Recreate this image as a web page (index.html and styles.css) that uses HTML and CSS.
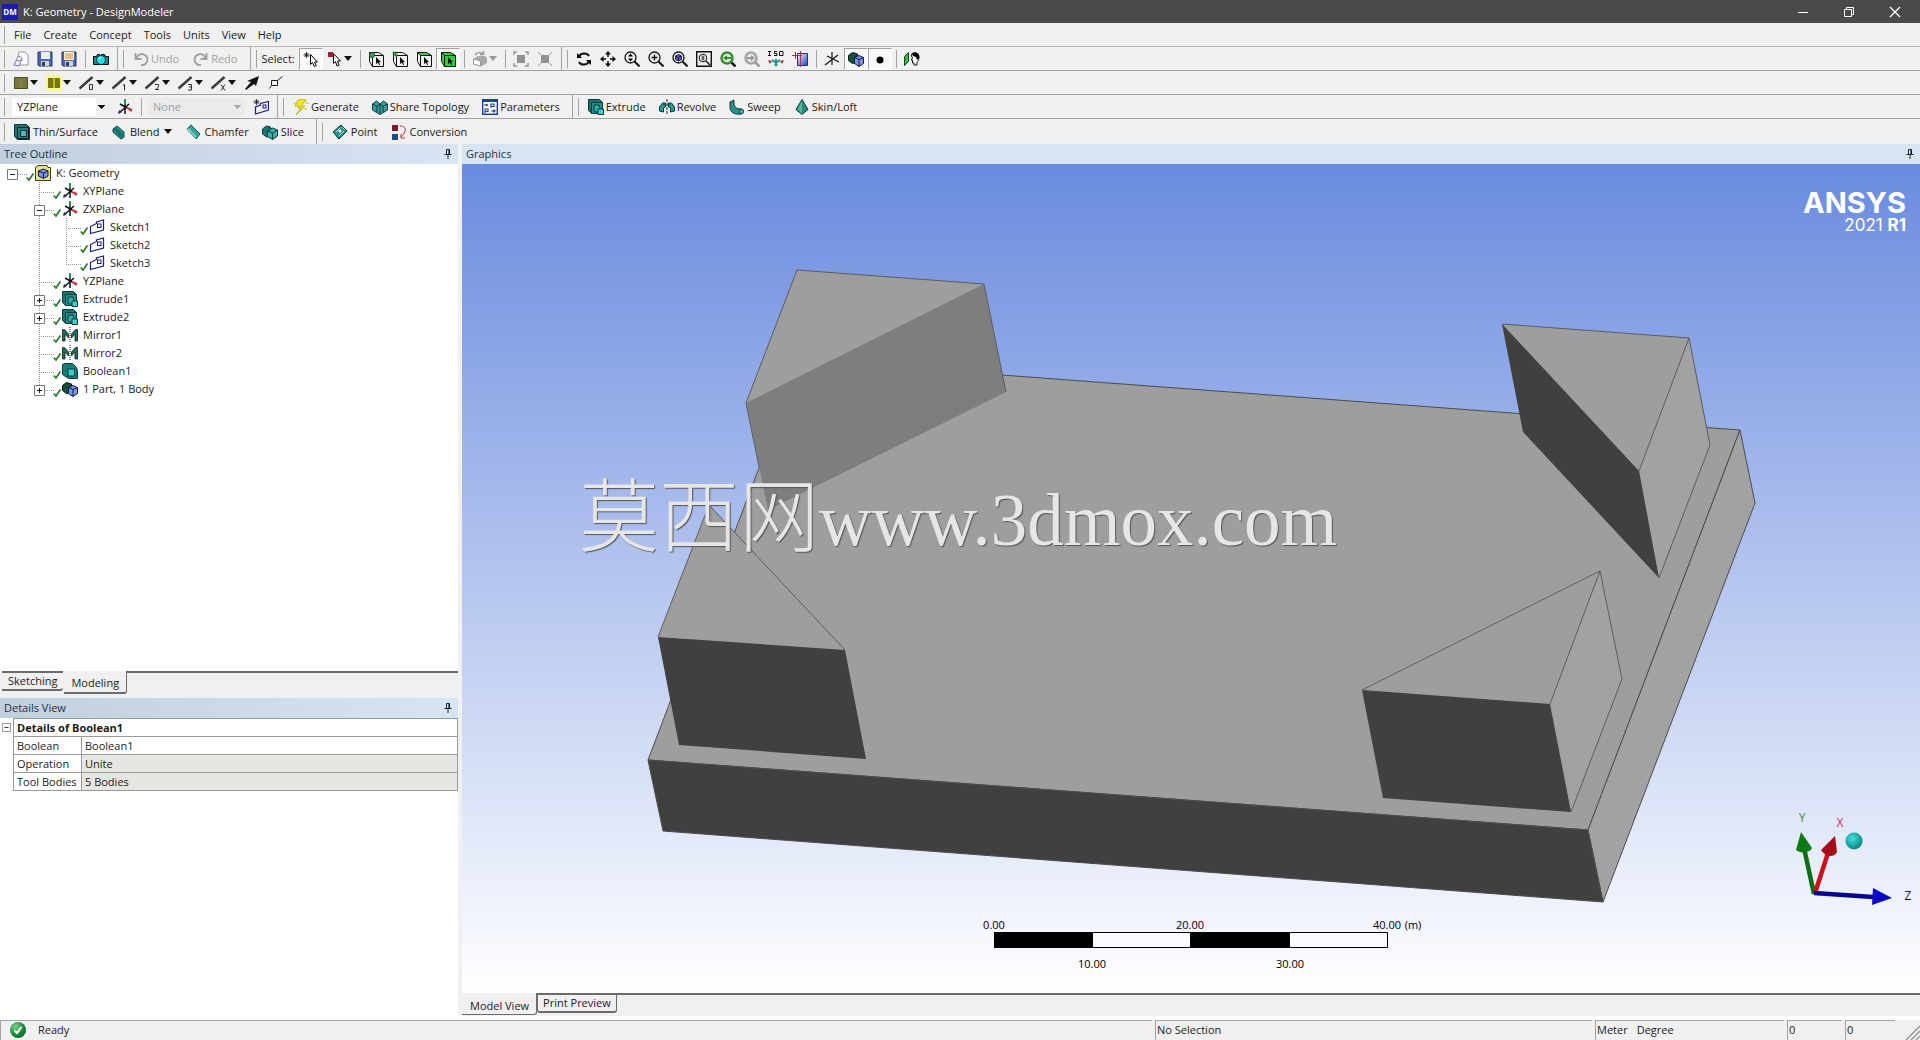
FILE: index.html
```html
<!DOCTYPE html>
<html lang="en">
<head>
<meta charset="utf-8">
<title>K: Geometry - DesignModeler</title>
<link rel="stylesheet" href="styles.css">
</head>
<body>
<svg class="defs" aria-hidden="true">
  <linearGradient id="g-blue" x1="0" y1="0" x2="1" y2="1"><stop offset="0" stop-color="#fff"/><stop offset="1" stop-color="#1c3fc0"/></linearGradient>
  <radialGradient id="g-ball" cx=".4" cy=".35" r=".7"><stop offset="0" stop-color="#3fe0dc"/><stop offset="1" stop-color="#067f80"/></radialGradient>
  <radialGradient id="g-ok" cx=".35" cy=".3" r=".8"><stop offset="0" stop-color="#7fd08a"/><stop offset=".6" stop-color="#1c8a3c"/><stop offset="1" stop-color="#0a5c22"/></radialGradient>
  <symbol id="i-new" viewBox="0 0 16 16"><path d="M6 1h6l3 3v10H3z" fill="#fbfbff" stroke="#99a" /><path d="M1 14l4-8 4 2-3 7z" fill="#eef" stroke="#77a"/><path d="M3 9l3-4 3 2-2 3z" fill="#fff" stroke="#889"/></symbol>
  <symbol id="i-save" viewBox="0 0 16 16"><path d="M1 1h14v14H2l-1-1z" fill="#4a68b0" stroke="#22346e"/><path d="M4 1h9v7H4z" fill="#e9eef8"/><path d="M4 10h8v5H4z" fill="#ccd3dd"/><path d="M5 11h3v4H5z" fill="#2c3c60"/></symbol>
  <symbol id="i-saveas" viewBox="0 0 16 16"><path d="M1 1h14v14H2l-1-1z" fill="#4a68b0" stroke="#22346e"/><path d="M3 1h10v8H3z" fill="#fff3d8"/><path d="M4 3h8M4 5h8M4 7h8" stroke="#d08a30"/><path d="M4 10h8v5H4z" fill="#ccd3dd"/><path d="M5 11h3v4H5z" fill="#2c3c60"/></symbol>
  <symbol id="i-camera" viewBox="0 0 16 16"><path d="M.5 5.500h3l1-2h2l1 1.500 1-1.500h3l1 2h3v8H.5z" fill="#1d8a94" stroke="#000"/><circle cx="8" cy="9" r="4.500" fill="#25dfe6" stroke="#033"/><path d="M6 7.500l2-1" stroke="#fff"/></symbol>
  <symbol id="i-undo" viewBox="0 0 16 16"><path d="M2.500 2v6h6M3.500 7.500A5.500 5.500 0 1 1 8 14" fill="none" stroke="#a2a2a2" stroke-width="2"/></symbol>
  <symbol id="i-redo" viewBox="0 0 16 16"><path d="M13.500 2v6h-6M12.500 7.500A5.500 5.500 0 1 0 8 14" fill="none" stroke="#a2a2a2" stroke-width="2"/></symbol>
  <symbol id="i-pick" viewBox="0 0 16 16"><path d="M3.500 1v6M.5 4h6M1.500 2l4 4M5.500 2l-4 4" stroke="#000" stroke-width=".8"/><path d="M7.500 3.500v10l2-2 1.800 4 2-1-1.800-3.500h3z" fill="#fff" stroke="#000"/></symbol>
  <symbol id="i-mode" viewBox="0 0 16 16"><path d="M1 1h5v5H1z" fill="#a01c30"/><path d="M6.500 2.500v10l2-2 1.500 4.500 2-1-1.500-4h3z" fill="#fff" stroke="#000"/></symbol>
  <symbol id="i-cube-wire" viewBox="0 0 16 16"><path d="M4.500 4.500h11v11h-11zM4.500 4.500l-3-3h9l5 3M1.500 1.500v9l3 5" fill="none" stroke="#111"/><path d="M8 6v7l2-1.500 1 2.500 1-.5-1-2.500h2z"/></symbol>
  <symbol id="i-cube-pt" viewBox="0 0 16 16"><use href="#i-cube-wire"/><circle cx="4" cy="4" r="2.500" fill="#4aa04a" stroke="#153"/></symbol>
  <symbol id="i-cube-edge" viewBox="0 0 16 16"><use href="#i-cube-wire"/><path d="M1 1l4 4" stroke="#2c8a2c" stroke-width="2.500"/></symbol>
  <symbol id="i-cube-face" viewBox="0 0 16 16"><path d="M1.500 1.500h9l5 3h-11z" fill="#45c94f"/><use href="#i-cube-wire"/></symbol>
  <symbol id="i-cube-body" viewBox="0 0 16 16"><path d="M1.500 1.500h9l5 3v11h-11l-3-5z" fill="#25d436"/><use href="#i-cube-wire"/></symbol>
  <symbol id="i-extend" viewBox="0 0 16 16"><path d="M1 8l5-3h7l2 2v5l-6 3.500-8-2z" fill="#a8a8a8"/><path d="M1.500 8l7 2v5l-7-2z" fill="#fff" stroke="#999"/><path d="M3 4c2-3 6-3 8-1M11.500 0v3.500H8" fill="none" stroke="#999" stroke-width="1.500"/></symbol>
  <symbol id="i-box" viewBox="0 0 16 16"><path d="M4 4h8v8H4z" fill="#919191"/><path d="M1 4V1h3M12 1h3v3M15 12v3h-3M4 15H1v-3" fill="none" stroke="#999" stroke-width="1.500"/></symbol>
  <symbol id="i-shrink" viewBox="0 0 16 16"><path d="M4 4h8v8H4z" fill="#919191"/><path d="M1 1l4 4M15 1l-4 4M1 15l4-4M15 15l-4-4" stroke="#999"/></symbol>
  <symbol id="i-rotate" viewBox="0 0 16 16"><path d="M3 6c1-4 8-5 10-1M13 10c-1 4-8 5-10 1" fill="none" stroke="#111" stroke-width="2"/><path d="M1 2v5h5zM15 14V9h-5z"/></symbol>
  <symbol id="i-pan" viewBox="0 0 16 16"><path d="M8 2v4M8 10v4M2 8h4M10 8h4" stroke="#111" stroke-width="1.500"/><path d="M8 0l3 3.500H5zM8 16l3-3.500H5zM0 8l3.500-3v6zM16 8l-3.500-3v6z"/></symbol>
  <symbol id="i-lens" viewBox="0 0 16 16"><circle cx="6.500" cy="6.500" r="5.500" fill="none" stroke="#111" stroke-width="1.300"/><path d="M10.500 10.500l5 5" stroke="#111" stroke-width="2"/></symbol>
  <symbol id="i-zoom" viewBox="0 0 16 16"><use href="#i-lens"/><path d="M6.500 2.500l2.500 3H4zM6.500 10.500l2.500-3H4z"/></symbol>
  <symbol id="i-zoomin" viewBox="0 0 16 16"><use href="#i-lens"/><path d="M6.500 3.500v6M3.500 6.500h6" stroke="#111" stroke-width="1.300"/></symbol>
  <symbol id="i-zoombody" viewBox="0 0 16 16"><use href="#i-lens"/><path d="M3.500 5l3-1.500 3 1.500v3.500l-3 1.500-3-1.500z" fill="#5a58b8" stroke="#1c1c60"/><path d="M3.500 5l3 1.500 3-1.500M6.500 6.500V10" fill="none" stroke="#1c1c60"/></symbol>
  <symbol id="i-zoombox" viewBox="0 0 16 16"><path d="M.7.700h14.600v14.600H.7z" fill="none" stroke="#111" stroke-width="1.400"/><circle cx="7" cy="7" r="3.800" fill="none" stroke="#111"/><path d="M10 10l4 4" stroke="#111" stroke-width="1.500"/><path d="M7 4.500v5M5.500 6h3M5.500 8h3" stroke="#111" stroke-width=".8"/></symbol>
  <symbol id="i-prev" viewBox="0 0 16 16"><path d="M11 11l4.500 4.500" stroke="#111" stroke-width="2.500"/><circle cx="7" cy="7" r="5.500" fill="#e4f5df" stroke="#3a8a34" stroke-width="2.500"/><path d="M3 7l4-3v2h4v2H7v2z" fill="#3a8a34"/></symbol>
  <symbol id="i-next" viewBox="0 0 16 16"><path d="M11 11l4.500 4.500" stroke="#999" stroke-width="2.500"/><circle cx="7" cy="7" r="5.500" fill="#e8e8e8" stroke="#a5a5a5" stroke-width="2.500"/><path d="M11 7L7 4v2H3v2h4v2z" fill="#999"/></symbol>
  <symbol id="i-iso" viewBox="0 0 16 16"><path d="M1.500 0v5M0 .5h3M0 4.500h3M9 .5H6.500v2H9v2H6M11.500.5h3.500v4h-3.500z" fill="none" stroke="#111"/><path d="M8 8v5M4 9l4 3 4-3" stroke="#1a9a94" stroke-width="2" fill="none"/><path d="M0 9l4 1-2 3zM16 9l-4 1 2 3z" fill="#a03030"/><path d="M6 13h4l-2 3z" fill="#1a9a94"/></symbol>
  <symbol id="i-lookat" viewBox="0 0 16 16"><path d="M5.500 2.500h10v12h-10z" fill="url(#g-blue)" stroke="#22306e"/><path d="M0 4.500h10M8.500 0v16M3.500 1v7" stroke="#b0304a" fill="none"/></symbol>
  <symbol id="i-axes" viewBox="0 0 16 16"><path d="M8 1v13M1 14L14 4M3 5l12 6" stroke="#111" stroke-width="1.200"/></symbol>
  <symbol id="i-part" viewBox="0 0 16 16"><path d="M.5 4.500l4-3 5 1.500v8l-5 1.500-4-3z" fill="#154f37" stroke="#03180f"/><path d="M6.500 6.500l4.500-2 4.500 2v6l-4.500 3-4.500-3z" fill="#7c95de" stroke="#101850"/><path d="M6.500 6.500l4.500 2 4.500-2M11 8.500v7" fill="none" stroke="#101850"/></symbol>
  <symbol id="i-dot" viewBox="0 0 16 16"><circle cx="8" cy="9" r="3.500"/></symbol>
  <symbol id="i-face" viewBox="0 0 16 16"><path d="M.5 5.500l4-4v9l-4 4z" fill="#3fb04a" stroke="#0c4a16"/><path d="M7 4c2-4 9-2 8 3-.5 3-1 3-2 4v3h-3v-2H8.500V9H7l1.500-2z" fill="#fff" stroke="#111"/><path d="M8 3c3-3 8-1 7 4l-2 2-1-3-3-1z"/></symbol>
  <symbol id="i-rect" viewBox="0 0 16 16"><path d="M1.500 2.500h13v11h-13z" fill="#77773f" stroke="#4d4d20"/><path d="M8 3v10" stroke="#8f8f55"/></symbol>
  <symbol id="i-rect2" viewBox="0 0 16 16"><rect width="16" height="16" rx="3" fill="#f8f88a"/><path d="M2 3h5.500v10H2zM8.500 3H14v10H8.500z" fill="#77770c"/></symbol>
  <symbol id="i-line" viewBox="0 0 16 16"><path d="M.5 13.500L13.500 2" stroke="#3c3c3c" stroke-width="2.500"/></symbol>
  <symbol id="i-l0" viewBox="0 0 16 16"><use href="#i-line"/><path d="M10.500 9.500h3v5h-3z" fill="none" stroke="#333"/></symbol>
  <symbol id="i-l1" viewBox="0 0 16 16"><use href="#i-line"/><path d="M11 10.500l1.500-1v6" fill="none" stroke="#333"/></symbol>
  <symbol id="i-l2" viewBox="0 0 16 16"><use href="#i-line"/><path d="M10 9.500h3.500v2.500l-3 2.500H14" fill="none" stroke="#333"/></symbol>
  <symbol id="i-l3" viewBox="0 0 16 16"><use href="#i-line"/><path d="M10 9.500h3.500v5.500H10M11 12h2.500" fill="none" stroke="#333"/></symbol>
  <symbol id="i-lx" viewBox="0 0 16 16"><use href="#i-line"/><path d="M10 9.500l4 6M14 9.500l-4 6" fill="none" stroke="#333"/></symbol>
  <symbol id="i-arrow" viewBox="0 0 16 16"><path d="M15 1l-3 10-2-2-8 6-1-1 6-7-4-1z" fill="#111"/></symbol>
  <symbol id="i-vertex" viewBox="0 0 16 16"><path d="M3.500 5.500h6v5h-6zM9.500 5.500l5-4M3.500 10.500l-2 3" fill="none" stroke="#222"/></symbol>
  <symbol id="i-plane" viewBox="0 0 16 16"><path d="M8 1v14M2 14L12 5M3 5l7 4" stroke="#111" stroke-width="1.500" fill="none"/><path d="M7 0h2v5H7z" fill="#2f8f4f"/><path d="M10 8l5.500 2-1 3-4.500-3z" fill="#c03848"/><path d="M1 15l1-4 3 2z" fill="#26268c"/></symbol>
  <symbol id="i-sketch" viewBox="0 0 16 16"><path d="M1.500 14.500v-7l6-3V3l7-2v10z" fill="none" stroke="#1b1b86" stroke-width="1.200"/><rect x="8.500" y="5" width="3.500" height="3.500" fill="none" stroke="#1b1b86"/></symbol>
  <symbol id="i-newsketch" viewBox="0 0 16 16"><path d="M2.500 15V8l5-2V4.500l8-2V11z" fill="none" stroke="#1b1b86" stroke-width="1.200"/><rect x="10" y="6" width="3" height="3" fill="none" stroke="#1b1b86"/><path d="M3.500 0v6M.5 3h6M1.500 1l4 4M5.500 1l-4 4" stroke="#111" stroke-width=".8"/></symbol>
  <symbol id="i-generate" viewBox="0 0 16 16"><path d="M11 0L5 1 2 7h4l-1 2h3l-5 7 9-9H8l5-6z" fill="#f4ea1a" stroke="#a89a10" stroke-width=".7"/><path d="M0 4h3M11 10h3M12 4h4" stroke="#d8c814"/></symbol>
  <symbol id="i-share" viewBox="0 0 16 16"><path d="M.5 5l4-3 3.500 3 3.500-3 4 3v6L8 15.500.5 11z" fill="#3a9c9c" stroke="#0a4040"/><path d="M.5 5L5 7.500 8 5l3 2.500L15.500 5M5 7.500V13M11 7.500V13M8 5v10" fill="none" stroke="#0a4040"/></symbol>
  <symbol id="i-param" viewBox="0 0 16 16"><path d="M.7 1h14.600v14.300H.7z" fill="#fff" stroke="#1c3f9c" stroke-width="1.400"/><path d="M0 0h16v3H0z" fill="#1c3f9c"/><path d="M2 6h3M9 9V5h3v2.500H9M3 14v-4h3v2.500H3M9 12h4M4 5l1.500 1L4 7M11.500 10.500L13 12l-1.500 1.500" fill="none" stroke="#1c3f9c" stroke-width="1.200"/></symbol>
  <symbol id="i-extrude" viewBox="0 0 16 16"><path d="M.5.500h11l3 3v11h-11l-3-3z" fill="#1b7575" stroke="#063b3b"/><path d="M3.500 3.500h11v11h-11z" fill="#2b8f8c" stroke="#063b3b"/><path d="M6 6h5l1 3v4H7l-1-2z" fill="#36aaa6" stroke="#063b3b"/><path d="M10 10h5.500v5.500H10z" fill="#3fd0d0" stroke="#063b3b"/></symbol>
  <symbol id="i-revolve" viewBox="0 0 16 16"><path d="M.5 12V8l3-4h3v4l-2 1v4zM15.500 12V8l-3-4h-3v4l2 1v4z" fill="#2b9a90" stroke="#063b3b"/><path d="M8 0v16M4 6h8" stroke="#063b3b" stroke-dasharray="3 1"/></symbol>
  <symbol id="i-sweep" viewBox="0 0 16 16"><path d="M1 3l4-2v5c1 3 4 4 7 4l3 2-3 3C5 16 1 13 1 8z" fill="#2b8f8c" stroke="#063b3b"/><ellipse cx="12.500" cy="12.500" rx="2" ry="2.500" fill="#45c0b8" stroke="#063b3b"/></symbol>
  <symbol id="i-skin" viewBox="0 0 16 16"><path d="M8 .5l3 5 3 5-6 5-6-5 3-5z" fill="#258878" stroke="#063b3b"/><path d="M8 1v14l-4-5z" fill="#50b8a0"/></symbol>
  <symbol id="i-thin" viewBox="0 0 16 16"><path d="M.5.500h12l3 3v12h-12l-3-3z" fill="#1b7575" stroke="#063b3b"/><path d="M3.500 3.500h11v11h-11z" fill="#1f8080" stroke="#022"/><path d="M6.500 6.500h6v6h-6z" fill="#4ab8b4" stroke="#022"/></symbol>
  <symbol id="i-blend" viewBox="0 0 16 16"><path d="M2 5l4-3 7 6v5l-3 2-8-7z" fill="#2b9a90" stroke="#063b3b"/><path d="M2 5l4-1 7 7-3 3z" fill="#197070"/></symbol>
  <symbol id="i-chamfer" viewBox="0 0 16 16"><path d="M2 5l4-4 9 9-4 5z" fill="#2fa39c" stroke="#0a5a5a"/><path d="M2 5l9 10v-3L4 4z" fill="#7fd0c8"/></symbol>
  <symbol id="i-slice" viewBox="0 0 16 16"><path d="M.5 5l4-3 4 1v9l-4 1-4-3z" fill="#1b7575" stroke="#063b3b"/><path d="M5.500 7l5-3 5 2v6l-5 3.500-5-3z" fill="#38b0a4" stroke="#063b3b"/><path d="M5.500 7l5 2 5-3M10.500 9v6" stroke="#063b3b" fill="none"/></symbol>
  <symbol id="i-point" viewBox="0 0 16 16"><path d="M1 8l8-7 6 6-8 8z" fill="#2b8f8c" stroke="#063b3b"/><path d="M4 8l4-4M7 12l5-5M10 3l3 3" stroke="#a8e0dc"/><circle cx="8" cy="7" r="1.500" fill="#fff"/></symbol>
  <symbol id="i-conv" viewBox="0 0 16 16"><path d="M1 1h6v6H1z" fill="#7d1c2c"/><path d="M1 10h6v6H1z" fill="#1c4a8c"/><path d="M9 2c4 0 6 2 5 5s-2 4-4 6M10 10v4h4" fill="none" stroke="#b83040"/></symbol>
  <symbol id="i-root" viewBox="0 0 16 16"><path d="M.5 2.500L3 .5h9l1 2h2.500v13H.5z" fill="#e9e08e" stroke="#3f3c10"/><path d="M3.500 6l5-2 4.500 2v5l-4.500 2.500-5-2.500z" fill="#7c95de" stroke="#101850"/><path d="M3.500 6l5 2 4.500-2M8.500 8v5" fill="none" stroke="#101850"/></symbol>
  <symbol id="i-mirror" viewBox="0 0 16 16"><path d="M.5 2.500h2l4 4.500v4L3 7v7H.5zM15.500 2.500h-2L9.500 7v4L13 7v7h2.500z" fill="#1d6e5c" stroke="#0a1f1a" stroke-width=".8"/><path d="M8 0v16" stroke="#111" stroke-dasharray="1 1"/></symbol>
  <symbol id="i-bool" viewBox="0 0 16 16"><path d="M.5 1.500l2-1h8l4 4 1 3v8h-9l-6-4z" fill="#1b7d78" stroke="#063b3b"/><path d="M6 6h6.500v7H6z" fill="#35d0cc" stroke="#063b3b"/></symbol>
  <symbol id="i-check" viewBox="0 0 8 8"><path d="M.8 4.500L3 7l4.500-6.500" fill="none" stroke="#2f7d32" stroke-width="1.800"/></symbol>
  <symbol id="i-pin" viewBox="0 0 8 10"><path d="M2.500.5h3v5h-3zM.5 5.500h7M4 6v4" fill="none" stroke="#1b2733" /><path d="M4.500 1h1v4h-1z"/></symbol>
  <symbol id="i-minus" viewBox="0 0 11 11"><path d="M.5.500h10v10H.5z" fill="#fff" stroke="#777"/><path d="M3 5.500h5" stroke="#111"/></symbol>
  <symbol id="i-plus" viewBox="0 0 11 11"><path d="M.5.500h10v10H.5z" fill="#fff" stroke="#777"/><path d="M3 5.500h5M5.500 3v5" stroke="#111"/></symbol>
</svg>

<header class="titlebar">
  <span class="app-badge">DM</span>
  <h1 class="title">K: Geometry - DesignModeler</h1>
  <button class="win" aria-label="Minimize"><svg width="12" height="12"><path d="M1 6.500h10" stroke="#fff"/></svg></button>
  <button class="win" aria-label="Restore"><svg width="12" height="12"><path d="M1.500 3.500h7v7h-7zM3.500 3V1.500h7v7H9" fill="none" stroke="#fff"/></svg></button>
  <button class="win" aria-label="Close"><svg width="12" height="12"><path d="M1 1l10 10M11 1L1 11" stroke="#fff" stroke-width="1.300"/></svg></button>
</header>

<nav class="row menu">
  <span class="grip"></span>
  <button>File</button><button>Create</button><button>Concept</button><button>Tools</button><button>Units</button><button>View</button><button>Help</button>
</nav>

<div class="row">
  <div class="bar"><span class="grip"></span>
    <button class="tb" aria-label="New"><svg><use href="#i-new"/></svg></button>
    <button class="tb" aria-label="Save"><svg><use href="#i-save"/></svg></button>
    <button class="tb" aria-label="Save as"><svg><use href="#i-saveas"/></svg></button>
    <span class="sep"></span>
    <button class="tb" aria-label="Image capture"><svg><use href="#i-camera"/></svg></button>
  </div>
  <div class="bar"><span class="grip"></span>
    <button class="lbl" disabled><svg><use href="#i-undo"/></svg>Undo</button>
    <button class="lbl" disabled><svg><use href="#i-redo"/></svg>Redo</button>
  </div>
  <div class="bar"><span class="grip"></span>
    <span class="caption">Select:</span>
    <button class="tb on" aria-label="New selection"><svg><use href="#i-pick"/></svg></button>
    <button class="tb drop" aria-label="Select mode"><svg><use href="#i-mode"/></svg><i class="caret"></i></button>
    <span class="sep"></span>
    <button class="tb" aria-label="Points"><svg><use href="#i-cube-pt"/></svg></button>
    <button class="tb" aria-label="Edges"><svg><use href="#i-cube-edge"/></svg></button>
    <button class="tb" aria-label="Faces"><svg><use href="#i-cube-face"/></svg></button>
    <button class="tb on" aria-label="Bodies"><svg><use href="#i-cube-body"/></svg></button>
    <span class="sep"></span>
    <button class="tb drop" disabled aria-label="Extend selection"><svg><use href="#i-extend"/></svg><i class="caret"></i></button>
    <span class="sep"></span>
    <button class="tb" disabled aria-label="Expand"><svg><use href="#i-box"/></svg></button>
    <button class="tb" disabled aria-label="Shrink"><svg><use href="#i-shrink"/></svg></button>
  </div>
  <div class="bar last"><span class="grip"></span>
    <button class="tb" aria-label="Rotate"><svg><use href="#i-rotate"/></svg></button>
    <button class="tb" aria-label="Pan"><svg><use href="#i-pan"/></svg></button>
    <button class="tb" aria-label="Zoom"><svg><use href="#i-zoom"/></svg></button>
    <button class="tb" aria-label="Zoom in"><svg><use href="#i-zoomin"/></svg></button>
    <button class="tb" aria-label="Zoom to body"><svg><use href="#i-zoombody"/></svg></button>
    <button class="tb" aria-label="Box zoom"><svg><use href="#i-zoombox"/></svg></button>
    <button class="tb" aria-label="Previous view"><svg><use href="#i-prev"/></svg></button>
    <button class="tb" disabled aria-label="Next view"><svg><use href="#i-next"/></svg></button>
    <button class="tb" aria-label="Isometric view"><svg><use href="#i-iso"/></svg></button>
    <button class="tb" aria-label="Look at"><svg><use href="#i-lookat"/></svg></button>
    <span class="sep"></span>
    <button class="tb" aria-label="Display plane"><svg><use href="#i-axes"/></svg></button>
    <button class="tb on" aria-label="Display model"><svg><use href="#i-part"/></svg></button>
    <button class="tb on" aria-label="Display points"><svg><use href="#i-dot"/></svg></button>
    <span class="sep"></span>
    <button class="tb" aria-label="Look at face"><svg><use href="#i-face"/></svg></button>
  </div>
</div>

<div class="row">
  <div class="bar last"><span class="grip"></span>
    <button class="tb drop" aria-label="Face colour"><svg><use href="#i-rect"/></svg><i class="caret"></i></button>
    <button class="tb drop" aria-label="Edge colouring"><svg><use href="#i-rect2"/></svg><i class="caret"></i></button>
    <button class="tb drop" aria-label="Edges with no faces"><svg><use href="#i-l0"/></svg><i class="caret"></i></button>
    <button class="tb drop" aria-label="Edges with one face"><svg><use href="#i-l1"/></svg><i class="caret"></i></button>
    <button class="tb drop" aria-label="Edges with two faces"><svg><use href="#i-l2"/></svg><i class="caret"></i></button>
    <button class="tb drop" aria-label="Edges with three faces"><svg><use href="#i-l3"/></svg><i class="caret"></i></button>
    <button class="tb drop" aria-label="Edges with many faces"><svg><use href="#i-lx"/></svg><i class="caret"></i></button>
    <button class="tb" aria-label="Edge direction"><svg><use href="#i-arrow"/></svg></button>
    <button class="tb" aria-label="Vertices"><svg><use href="#i-vertex"/></svg></button>
  </div>
</div>

<div class="row">
  <div class="bar"><span class="grip"></span>
    <select class="combo" aria-label="Active plane"><option>YZPlane</option></select>
    <button class="tb" aria-label="New plane"><svg><use href="#i-plane"/></svg></button>
    <span class="sep"></span>
    <select class="combo" aria-label="Active sketch" disabled><option>None</option></select>
    <button class="tb" aria-label="New sketch"><svg><use href="#i-newsketch"/></svg></button>
  </div>
  <div class="bar"><span class="grip"></span>
    <button class="lbl"><svg><use href="#i-generate"/></svg>Generate</button>
    <button class="lbl"><svg><use href="#i-share"/></svg>Share Topology</button>
    <button class="lbl"><svg><use href="#i-param"/></svg>Parameters</button>
  </div>
  <div class="bar last"><span class="grip"></span>
    <button class="lbl"><svg><use href="#i-extrude"/></svg>Extrude</button>
    <button class="lbl"><svg><use href="#i-revolve"/></svg>Revolve</button>
    <button class="lbl"><svg><use href="#i-sweep"/></svg>Sweep</button>
    <button class="lbl"><svg><use href="#i-skin"/></svg>Skin/Loft</button>
  </div>
</div>

<div class="row bottom">
  <div class="bar"><span class="grip"></span>
    <button class="lbl"><svg><use href="#i-thin"/></svg>Thin/Surface</button>
    <button class="lbl"><svg><use href="#i-blend"/></svg>Blend<i class="caret"></i></button>
    <button class="lbl"><svg><use href="#i-chamfer"/></svg>Chamfer</button>
    <button class="lbl"><svg><use href="#i-slice"/></svg>Slice</button>
  </div>
  <div class="bar last"><span class="grip"></span>
    <button class="lbl"><svg><use href="#i-point"/></svg>Point</button>
    <button class="lbl"><svg><use href="#i-conv"/></svg>Conversion</button>
  </div>
</div>

<main class="work">
  <aside class="side">
    <h2 class="head">Tree Outline<svg class="pin"><use href="#i-pin"/></svg></h2>
    <div class="tree">
      <ul>
        <li><div class="node"><svg class="exp"><use href="#i-minus"/></svg><svg class="ck"><use href="#i-check"/></svg><svg class="ic"><use href="#i-root"/></svg>K: Geometry</div>
          <ul>
            <li><div class="node"><span class="exp"></span><svg class="ck"><use href="#i-check"/></svg><svg class="ic"><use href="#i-plane"/></svg>XYPlane</div></li>
            <li><div class="node"><svg class="exp"><use href="#i-minus"/></svg><svg class="ck"><use href="#i-check"/></svg><svg class="ic"><use href="#i-plane"/></svg>ZXPlane</div>
              <ul>
                <li><div class="node"><span class="exp"></span><svg class="ck"><use href="#i-check"/></svg><svg class="ic"><use href="#i-sketch"/></svg>Sketch1</div></li>
                <li><div class="node"><span class="exp"></span><svg class="ck"><use href="#i-check"/></svg><svg class="ic"><use href="#i-sketch"/></svg>Sketch2</div></li>
                <li><div class="node"><span class="exp"></span><svg class="ck"><use href="#i-check"/></svg><svg class="ic"><use href="#i-sketch"/></svg>Sketch3</div></li>
              </ul>
            </li>
            <li><div class="node"><span class="exp"></span><svg class="ck"><use href="#i-check"/></svg><svg class="ic"><use href="#i-plane"/></svg>YZPlane</div></li>
            <li><div class="node"><svg class="exp"><use href="#i-plus"/></svg><svg class="ck"><use href="#i-check"/></svg><svg class="ic"><use href="#i-extrude"/></svg>Extrude1</div></li>
            <li><div class="node"><svg class="exp"><use href="#i-plus"/></svg><svg class="ck"><use href="#i-check"/></svg><svg class="ic"><use href="#i-extrude"/></svg>Extrude2</div></li>
            <li><div class="node"><span class="exp"></span><svg class="ck"><use href="#i-check"/></svg><svg class="ic"><use href="#i-mirror"/></svg>Mirror1</div></li>
            <li><div class="node"><span class="exp"></span><svg class="ck"><use href="#i-check"/></svg><svg class="ic"><use href="#i-mirror"/></svg>Mirror2</div></li>
            <li><div class="node"><span class="exp"></span><svg class="ck"><use href="#i-check"/></svg><svg class="ic"><use href="#i-bool"/></svg>Boolean1</div></li>
            <li><div class="node"><svg class="exp"><use href="#i-plus"/></svg><svg class="ck"><use href="#i-check"/></svg><svg class="ic"><use href="#i-part"/></svg>1 Part, 1 Body</div></li>
          </ul>
        </li>
      </ul>
    </div>
    <div class="tabs side-tabs">
      <button class="tab back">Sketching</button>
      <button class="tab front">Modeling</button>
      <span class="rest"></span>
    </div>
    <h2 class="head">Details View<svg class="pin"><use href="#i-pin"/></svg></h2>
    <div class="details">
      <table>
        <tr><td class="gut"><svg width="9" height="9" viewBox="0 0 11 11"><use href="#i-minus"/></svg></td><th colspan="2">Details of Boolean1</th></tr>
        <tr><td class="gut"></td><td class="key">Boolean</td><td>Boolean1</td></tr>
        <tr><td class="gut"></td><td class="key">Operation</td><td class="ro">Unite</td></tr>
        <tr><td class="gut"></td><td class="key">Tool Bodies</td><td class="ro">5 Bodies</td></tr>
      </table>
    </div>
  </aside>

  <section class="graphics">
    <h2 class="head light">Graphics<svg class="pin"><use href="#i-pin"/></svg></h2>
    <div class="view">
      <svg class="scene" viewBox="462 164 1458 829" preserveAspectRatio="xMidYMid meet">
        <g stroke="#4c4c4c" stroke-width="1" stroke-linejoin="round">
          <path d="M648 760L800 360 1740 430 1588 830z" fill="#9e9e9e"/>
          <path d="M1740 430L1755 503 1603 902 1588 830z" fill="#a2a2a2"/>
          <path d="M648 760L1588 830 1603 902 663 831z" fill="#404040"/>
        </g>
        <path d="M797 270L984 284 746 403z" class="top"/>
        <path d="M984 284L1006 392 768 510 746 403z" fill="#7e7e7e"/>
        <path d="M759 467L746 403 797 270 984 284 1006 392" class="edge"/>
        <path d="M709 505L845 650 658 637z" class="top"/>
        <path d="M709 505L845 650M709 505L658 637" class="edge"/>
        <path d="M658 637L845 650 866 759 679 745z" fill="#404040"/>
        <path d="M1502 324L1689 338 1639 471z" class="top"/>
        <path d="M1689 338L1710 445 1659 578 1639 471z" class="wall"/>
        <path d="M1502 324L1689 338 1710 445 1659 578M1689 338L1639 471" class="edge"/>
        <path d="M1502 324L1639 471 1659 578 1523 432z" fill="#404040"/>
        <path d="M1600 571L1550 704 1362 690z" class="top"/>
        <path d="M1600 571L1622 679 1571 812 1550 704z" class="wall"/>
        <path d="M1362 690L1600 571 1622 679 1571 812M1600 571L1550 704" class="edge"/>
        <path d="M1362 690L1550 704 1571 812 1383 798z" fill="#404040"/>

        <text class="mark" x="579" y="545"><tspan class="mark-cjk">莫西网</tspan><tspan class="mark-lat">www.3dmox.com</tspan></text>

        <text class="logo" x="1906" y="213">ANSYS</text>
        <text class="release" x="1906" y="231">2021 <tspan font-weight="700">R1</tspan></text>

        <path d="M994.500 932.500h393v15h-393z" fill="#fbfbff" stroke="#000"/>
        <path d="M994 932h99v16h-99zM1190 932h100v16h-100z"/>
        <g class="scale">
          <text x="994" y="929">0.00</text><text x="1190" y="929">20.00</text><text x="1387" y="929">40.00</text><text x="1413" y="929">(m)</text>
          <text x="1092" y="968">10.00</text><text x="1290" y="968">30.00</text>
        </g>

        <path d="M1814 894L1804 848" stroke="#0b6e12" stroke-width="4.500"/>
        <path d="M1801 832l11 16c-2 5-12 6-16 2z" fill="#0d7a14"/>
        <path d="M1815 893L1828 853" stroke="#cc1119" stroke-width="4.500"/>
        <path d="M1835 836l2 16c-3 6-12 5-16-2z" fill="#a80d16"/>
        <path d="M1814 893L1873 897" stroke="#06068f" stroke-width="4.500"/>
        <path d="M1892 898l-20 7 1-17z" fill="#0a0ac4"/>
        <circle cx="1854" cy="841" r="8.500" fill="url(#g-ball)"/>
        <g class="axis"><text x="1802" y="822" fill="#3f8f4a">Y</text><text x="1840" y="827" fill="#c03060">X</text><text x="1908" y="900" fill="#151560">Z</text></g>
      </svg>
    </div>
    <div class="tabs view-tabs">
      <button class="tab front">Model View</button>
      <button class="tab back">Print Preview</button>
      <span class="rest"></span>
    </div>
  </section>
</main>

<footer class="status">
  <div class="pane ready"><svg width="16" height="16" viewBox="0 0 16 16"><circle cx="8" cy="8" r="8" fill="url(#g-ok)"/><path d="M4.500 8.500l2.500 2.500 4.500-6" fill="none" stroke="#fff" stroke-width="2"/></svg>Ready</div>
  <div class="pane">No Selection</div>
  <div class="pane units"><span>Meter</span><span>Degree</span></div>
  <div class="pane">0</div>
  <div class="pane">0</div>
  <svg class="sizer" width="16" height="16"><path d="M2 16L16 2M7 16l9-9M12 16l4-4" stroke="#999" stroke-width="1.500"/></svg>
</footer>
</body>
</html>
```

FILE: styles.css
```css
* { box-sizing: border-box; }
body {
  margin: 0;
  height: 100vh;
  display: flex;
  flex-direction: column;
  overflow: hidden;
  background: #f0f0f0;
  color: #1a1a1a;
  font: 11px/16px "Open Sans", "Noto Sans", "Noto Sans CJK SC", sans-serif;
}
button, select {
  font: inherit;
  color: inherit;
  background: none;
  border: 0;
  padding: 0;
  margin: 0;
}
h1, h2, ul { margin: 0; padding: 0; font-size: 11px; font-weight: 400; list-style: none; }
svg { display: block; flex: none; }
.defs { position: absolute; width: 0; height: 0; }

.titlebar { display: flex; align-items: center; height: 23px; background: #4a4a4a; color: #fff; }
.app-badge {
  width: 16px; height: 16px; margin: 0 5px 0 2px;
  background: #1c1cb0; font-size: 8px; font-weight: 700; text-align: center;
}
.title { flex: 1; }
.win { width: 46px; height: 22px; display: grid; place-items: center; }
.titlebar { padding-right: 2px; }

.row { display: flex; height: 24px; border-bottom: 1px solid #a3a3a3; }
.row.bottom { border-bottom: 0; height: 25px; }
.menu { align-items: center; border-bottom-color: #b8b8b8; }
.menu button { padding: 0 7px 0 5px; }
.bar {
  display: flex; align-items: center;
  padding-right: 4px; margin-right: 1px;
  border-right: 1px solid #a3a3a3;
}
.bar.last { border-right: 0; }
.grip { width: 9px; height: 18px; background: linear-gradient(#a3a3a3, #a3a3a3) 4px 0 / 1px 100% no-repeat; }
.sep { width: 8px; height: 18px; background: linear-gradient(#a3a3a3, #a3a3a3) 4px 0 / 1px 100% no-repeat; }
.tb { width: 24px; height: 22px; display: flex; align-items: center; justify-content: center; }
.tb svg, .lbl svg { width: 16px; height: 16px; }
.tb.on { background: #f9f9f9; border: 1px solid; border-color: #a3a3a3 #fff #fff #a3a3a3; }
.tb.drop { width: 33px; gap: 1px; }
.caret { border: 4px solid transparent; border-top: 5px solid #111; border-bottom: 0; }
:disabled .caret { border-top-color: #9a9a9a; }
.lbl { height: 22px; display: flex; align-items: center; gap: 2px; padding: 0 8px 0 5px; }
.bottom .lbl { gap: 3px; }
.lbl .caret { margin-left: 2px; }
.lbl:disabled { color: #a0a0a0; padding-right: 9px; }
.caption { width: 38px; }
.combo {
  appearance: none;
  width: 97px; height: 18px; margin: 0 4px 0 3px; padding-left: 5px;
  background:
    linear-gradient(to bottom left, #111 50%, transparent 50%) 86px 7px / 4px 4px no-repeat,
    linear-gradient(to bottom right, #111 50%, transparent 50%) 90px 7px / 4px 4px no-repeat,
    linear-gradient(#fff, #fff) 0 0 / 84px 100% no-repeat;
}
.combo:disabled {
  color: #a0a0a0; opacity: 1;
  background:
    linear-gradient(to bottom left, #aaa 50%, transparent 50%) 86px 7px / 4px 4px no-repeat,
    linear-gradient(to bottom right, #aaa 50%, transparent 50%) 90px 7px / 4px 4px no-repeat,
    #ebebeb;
}

.work { flex: 1; min-height: 0; display: grid; grid-template-columns: 458px 1fr; column-gap: 4px; }
.side, .graphics { display: flex; flex-direction: column; min-width: 0; min-height: 0; }
.head {
  display: flex; align-items: center; justify-content: space-between;
  flex: none; height: 20px; padding: 0 6px 0 4px;
  background: linear-gradient(90deg, #c2cfdd, #d7e4f2);
  color: #22303c;
}
.head.light { background: #d7e4f2; }
.pin { width: 8px; height: 10px; }

.tree { flex: 508 1 0; background: #fff; overflow: hidden; }
.tree ul ul { padding-left: 27px; }
.tree ul ul > li { background: repeating-linear-gradient(#999 0 1px, transparent 1px 2px) 12px 0 / 1px 100% no-repeat; }
.tree ul ul > li:last-child { background-size: 1px 11px; }
.node {
  display: flex; align-items: center; height: 18px;
  background: repeating-linear-gradient(90deg, #999 0 1px, transparent 1px 2px) 12px 10px / 15px 1px no-repeat;
}
.exp { width: 11px; height: 11px; margin: 3px 8px 0 7px; }
.ck { width: 8px; height: 8px; margin: 8px 1px 0 0; }
.ic { width: 16px; height: 16px; margin-right: 5px; }

.tabs { display: flex; align-items: flex-start; flex: none; }
.tab { padding: 0 4px; border: solid #6b6b6b; border-width: 0 1px 2px 0; border-radius: 0 0 3px 0; }
.rest { flex: 1; border-top: 2px solid #6b6b6b; }
.side-tabs { height: 27px; }
.side-tabs .tab { height: 23px; padding: 2px 7px 0; }
.side-tabs .back { margin: 0 1px 0 2px; height: 20px; padding: 0 6px; border-top-width: 2px; border-right-width: 0; }
.view-tabs { height: 23px; }
.view-tabs .tab { height: 22px; padding: 4px 7px 0 8px; border-bottom-width: 1px; }
.view-tabs .back { height: 20px; padding: 0 5px; border-width: 2px 1px; border-radius: 0 0 3px 3px; }

.details { flex: 298 1 0; background: #fff; overflow: hidden; }
.details table { width: 100%; border-collapse: collapse; }
.details td, .details th {
  height: 18px; padding: 0 3px; border: 1px solid #999;
  text-align: left; line-height: 16px;
}
.details .gut { width: 13px; padding: 0 2px; border-width: 0; }
.details .key { width: 68px; white-space: nowrap; }
.details .ro { background: #e8e6e2; }

.view { flex: 1; min-height: 0; background: linear-gradient(#6a8bdf, #fff); }
.scene { width: 100%; height: 100%; }
.top { fill: #9e9e9e; }
.wall { fill: #a2a2a2; }
.edge { fill: none; stroke: #5c5c5c; }
.mark { fill: #e6e6e6; text-shadow: 1px 1px 1px #555; }
.mark-cjk { font: 300 80px "Noto Sans CJK SC", sans-serif; }
.mark-lat { font: 73px "Liberation Serif", serif; }
.logo { font: 700 29px Inter, sans-serif; fill: #fff; text-anchor: end; }
.release { font: 400 17px Inter, sans-serif; fill: #fff; text-anchor: end; }
.scale, .axis { font-size: 11px; text-anchor: middle; }
.axis { font-size: 12px; }

.status {
  display: grid; grid-template-columns: 1fr 440px 192px 58px 53px 22px;
  height: 24px; padding-top: 3px; flex: none;
  border-top: 1px solid #fff; box-shadow: inset 0 3px #fff;
}
.pane {
  display: flex; align-items: center; padding: 0 2px 2px 1px; margin-right: 3px;
  border: solid #a3a3a3; border-width: 1px 0 0 1px;
}
.ready { gap: 12px; padding-left: 9px; }
.units { gap: 9px; }
.sizer { align-self: end; justify-self: end; }
```
